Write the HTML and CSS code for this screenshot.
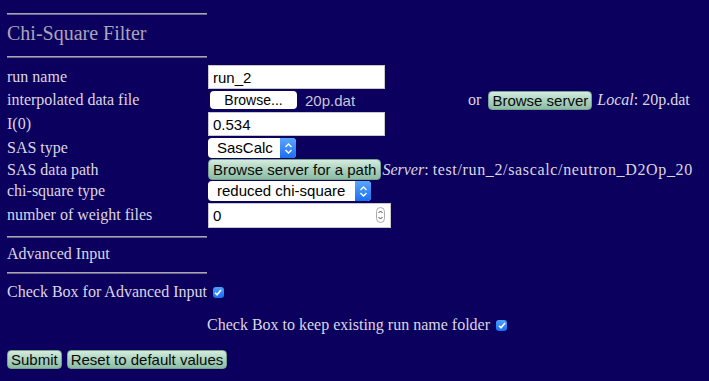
FILE: index.html
```html
<!DOCTYPE html>
<html>
<head>
<meta charset="utf-8">
<link rel="stylesheet" href="styles.css">
</head>
<body>
<div class="page">
  <div class="rule r1"></div>
  <h1 class="title">Chi-Square Filter</h1>
  <div class="rule r2"></div>

  <div class="form">
    <div class="row h24">
      <div class="label">run name</div>
      <div class="ctrl"><span class="text-input w177">run_2</span></div>
    </div>
    <div class="row h22">
      <div class="label">interpolated data file</div>
      <div class="ctrl">
        <span class="file-btn">Browse...</span>
        <span class="file-name">20p.dat</span>
        <span class="or">or</span>
        <span class="aqua-btn">Browse server</span>
        <span class="note"><i>Local</i>: 20p.dat</span>
      </div>
    </div>
    <div class="row h26">
      <div class="label">I(0)</div>
      <div class="ctrl"><span class="text-input w177">0.534</span></div>
    </div>
    <div class="row h22">
      <div class="label">SAS type</div>
      <div class="ctrl"><span class="select w88"><span class="sel-text">SasCalc</span><span class="sel-arrow"><svg width="9" height="13" viewBox="0 0 9 13"><path d="M1.5 5 L4.5 2 L7.5 5 M1.5 8 L4.5 11 L7.5 8" fill="none" stroke="#fff" stroke-width="1.4"/></svg></span></span></div>
    </div>
    <div class="row h21">
      <div class="label">SAS data path</div>
      <div class="ctrl">
        <span class="aqua-btn big">Browse server for a path</span>
        <span class="note tight"><i>Server</i>: <span class="path">test/run_2/sascalc/neutron_D2Op_20</span></span>
      </div>
    </div>
    <div class="row h22">
      <div class="label">chi-square type</div>
      <div class="ctrl"><span class="select w163"><span class="sel-text">reduced chi-square</span><span class="sel-arrow"><svg width="9" height="13" viewBox="0 0 9 13"><path d="M1.5 5 L4.5 2 L7.5 5 M1.5 8 L4.5 11 L7.5 8" fill="none" stroke="#fff" stroke-width="1.4"/></svg></span></span></div>
    </div>
    <div class="row h26">
      <div class="label">number of weight files</div>
      <div class="ctrl"><span class="text-input w183 num">0<span class="spin"><svg width="9" height="16" viewBox="0 0 9 16"><rect x="0.5" y="0.5" width="8" height="15" rx="4" fill="none" stroke="#aaa"/><path d="M2.5 6 L4.5 4 L6.5 6 M2.5 10 L4.5 12 L6.5 10" fill="none" stroke="#444" stroke-width="1"/></svg></span></span></div>
    </div>
  </div>

  <div class="rule r3"></div>
  <div class="section">Advanced Input</div>
  <div class="rule r4"></div>

  <div class="check-line">Check Box for Advanced Input <span class="checkbox"><svg width="8" height="7" viewBox="0 0 8 7"><path d="M1 3.8 L3 5.8 L7 1" fill="none" stroke="#fff" stroke-width="1.6"/></svg></span></div>

  <div class="check-line second">Check Box to keep existing run name folder <span class="checkbox"><svg width="8" height="7" viewBox="0 0 8 7"><path d="M1 3.8 L3 5.8 L7 1" fill="none" stroke="#fff" stroke-width="1.6"/></svg></span></div>

  <div class="actions">
    <span class="aqua-btn">Submit</span>
    <span class="aqua-btn">Reset to default values</span>
  </div>
</div>
</body>
</html>
```
FILE: styles.css
```css
html, body {
  margin: 0;
  padding: 0;
  background: #0b005e;
  height: 100%;
}
.page {
  padding: 13px 7px 0 7px;
  font-family: "Liberation Serif", "Times New Roman", serif;
  font-size: 16px;
  color: #dcd6e2;
}
.rule {
  width: 200px;
  height: 0;
  border-top: 1px solid #a8a4b0;
  border-bottom: 1px solid #6c6790;
}
.title {
  margin: 0;
  font-weight: normal;
  font-size: 20px;
  color: #aaa5b8;
  line-height: 24px;
  padding: 6px 0 11px 0;
}
.form {
  margin-top: 7px;
}
.row {
  display: flex;
  align-items: center;
}
.h24 { height: 24px; }
.h22 { height: 22px; }
.h26 { height: 26px; }
.h21 { height: 21px; }
.label {
  width: 201px;
  flex: none;
  line-height: 18px;
}
.ctrl {
  display: flex;
  align-items: center;
  white-space: nowrap;
  font-family: "Liberation Sans", Arial, sans-serif;
}
.text-input {
  display: flex;
  align-items: center;
  box-sizing: border-box;
  height: 24px;
  background: #fff;
  border: 1px solid #c8c8c8;
  color: #000;
  font-size: 15px;
  padding: 0 4px;
}
.w177 { width: 177px; }
.w183 { width: 183px; height: 25px; }
.num { justify-content: space-between; }
.spin { display: flex; align-items: center; margin-right: 1px; }
.file-btn {
  box-sizing: border-box;
  margin-left: 2px;
  width: 87px;
  height: 18px;
  background: #fff;
  border-radius: 4px;
  color: #000;
  font-size: 14px;
  line-height: 18px;
  text-align: center;
}
.file-name {
  margin-left: 8px;
  color: #c9c4d8;
  font-size: 15px;
}
.or {
  margin-left: 113px;
  font-family: "Liberation Serif", "Times New Roman", serif;
  font-size: 16px;
  color: #dcd6e2;
}
.aqua-btn {
  display: inline-block;
  box-sizing: border-box;
  height: 19px;
  padding: 0 4px;
  border-radius: 4px;
  background: linear-gradient(#d4ecde, #a8d0bc 55%, #8cbca4);
  border: 1px solid #7aa08e;
  color: #0a0a0a;
  font-family: "Liberation Sans", Arial, sans-serif;
  font-size: 15px;
  line-height: 17px;
}
.ctrl .aqua-btn { margin-left: 7px; padding: 0 3px; }
.ctrl .aqua-btn.big { margin-left: 0; height: 21px; line-height: 19px; font-size: 15px; padding: 0 4px; }
.note {
  margin-left: 5px;
  font-family: "Liberation Serif", "Times New Roman", serif;
  font-size: 16px;
  color: #dcd6e2;
}
.note.tight { margin-left: 1px; }
.path { letter-spacing: 0.65px; }
.select {
  display: flex;
  align-items: stretch;
  box-sizing: border-box;
  height: 20px;
  background: #fff;
  border-radius: 4px;
  overflow: hidden;
  color: #000;
  font-size: 15px;
}
.w88 { width: 88px; }
.w163 { width: 163px; }
.sel-text {
  flex: 1;
  padding-left: 9px;
  line-height: 20px;
}
.sel-arrow {
  width: 16px;
  display: flex;
  align-items: center;
  justify-content: center;
  background: linear-gradient(#5aa6ff, #1c6ef2);
}
.section {
  line-height: 18px;
  padding: 7px 0 9px 0;
}
.check-line {
  display: flex;
  align-items: center;
  margin-top: 9px;
  line-height: 18px;
}
.check-line.second {
  margin-top: 15px;
  margin-left: 200px;
}
.checkbox {
  margin-left: 6px;
  width: 11px;
  height: 11px;
  border-radius: 3px;
  background: linear-gradient(#4ea0ff, #1a6df0);
  display: inline-flex;
  align-items: center;
  justify-content: center;
}
.actions {
  display: flex;
  gap: 5px;
  margin-top: 16px;
}
.actions .aqua-btn { padding: 0 3px; }
.r3 { margin-top: 8px; }
```
